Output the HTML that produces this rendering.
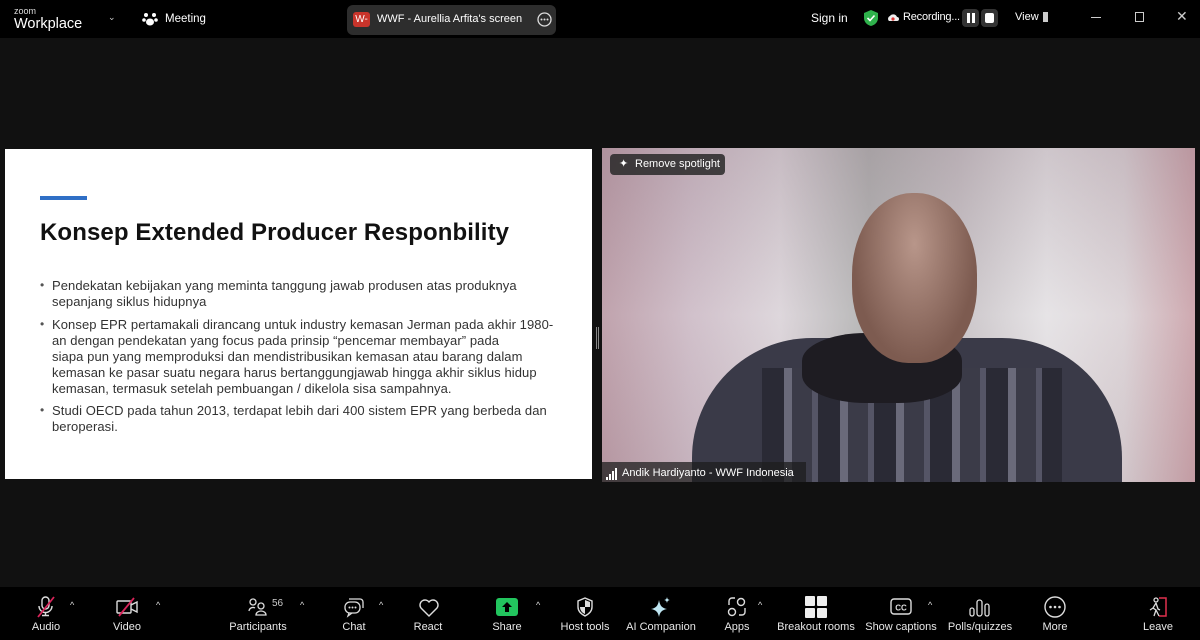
<!DOCTYPE html>
<html><head><meta charset="utf-8">
<style>
*{margin:0;padding:0;box-sizing:border-box}
body{width:1200px;height:640px;background:#111;position:relative;overflow:hidden;font-family:"Liberation Sans",sans-serif;color:#fff}
.abs{position:absolute}
.top{left:0;top:0;width:1200px;height:38px;background:#000}
.bot{left:0;top:587px;width:1200px;height:53px;background:#000}
.lbl{position:absolute;top:621px;font-size:11px;color:#e8e8e8;transform:translateX(-50%);white-space:nowrap}
.car{position:absolute;top:600px;font-size:9px;color:#ddd}
.slide{left:5px;top:149px;width:587px;height:330px;background:#fff;color:#111}
.slide p{position:absolute;left:47px;font-size:13px;letter-spacing:0.08px;line-height:16px;color:#333;white-space:nowrap}
.slide .b{position:absolute;left:35px;font-size:12px;color:#555}
svg{position:absolute;overflow:visible}
</style></head><body>
<div class="abs top"></div>
<div class="abs" style="left:14px;top:6px;font-size:9px;color:#ddd">zoom</div>
<div class="abs" style="left:14px;top:16px;font-size:14.5px;color:#fff">Workplace</div>
<div class="abs" style="left:108px;top:12px;font-size:9px;color:#ccc">⌄</div>
<svg style="left:142px;top:11px" width="16" height="16"><circle cx="4" cy="4" r="2" fill="#fff"/><circle cx="12" cy="4" r="2" fill="#fff"/><circle cx="2" cy="9" r="1.8" fill="#fff"/><circle cx="14" cy="9" r="1.8" fill="#fff"/><ellipse cx="8" cy="11" rx="4" ry="3.5" fill="#fff"/></svg>
<div class="abs" style="left:165px;top:13px;font-size:11.5px">Meeting</div>
<div class="abs" style="left:347px;top:5px;width:209px;height:30px;background:#2d2d2d;border-radius:6px"></div>
<div class="abs" style="left:353px;top:12px;width:17px;height:15px;background:#c8342b;border-radius:3px;font-size:10px;text-align:center;line-height:15px">W-</div>
<div class="abs" style="left:377px;top:13px;font-size:11px">WWF - Aurellia Arfita's screen</div>
<svg style="left:537px;top:12px" width="15" height="15"><circle cx="7.5" cy="7.5" r="6.5" fill="none" stroke="#ddd" stroke-width="1.3"/><circle cx="4.5" cy="7.5" r="1" fill="#ddd"/><circle cx="7.5" cy="7.5" r="1" fill="#ddd"/><circle cx="10.5" cy="7.5" r="1" fill="#ddd"/></svg>
<div class="abs" style="left:811px;top:11px;font-size:12px">Sign in</div>
<svg style="left:863px;top:9px" width="16" height="18"><path d="M8 1L15 4V9C15 13 12 16 8 17C4 16 1 13 1 9V4Z" fill="#2fb24c"/><path d="M4.5 9l2.5 2.5 4.5-5" stroke="#fff" stroke-width="1.6" fill="none"/></svg>
<svg style="left:887px;top:13px" width="12" height="9"><path d="M2 8a3 3 0 0 1 1-5a4 4 0 0 1 7 1a2 2 0 0 1 0 4z" fill="#eee"/><circle cx="6" cy="6" r="1.6" fill="#d33"/></svg>
<div class="abs" style="left:903px;top:11px;font-size:11px;letter-spacing:-0.2px">Recording...</div>
<div class="abs" style="left:962px;top:9px;width:17px;height:18px;background:#333;border-radius:4px"></div>
<div class="abs" style="left:967px;top:13px;width:2.5px;height:10px;background:#fff"></div><div class="abs" style="left:972px;top:13px;width:2.5px;height:10px;background:#fff"></div>
<div class="abs" style="left:981px;top:9px;width:17px;height:18px;background:#333;border-radius:4px"></div>
<div class="abs" style="left:985px;top:13px;width:9px;height:10px;background:#fff;border-radius:2px"></div>
<div class="abs" style="left:1015px;top:11px;font-size:11px">View</div>
<div class="abs" style="left:1043px;top:12px;width:5px;height:10px;background:#ccc"></div>
<div class="abs" style="left:1091px;top:17px;width:10px;height:1px;background:#ccc"></div>
<div class="abs" style="left:1135px;top:12px;width:9px;height:10px;border:1px solid #ccc"></div>
<div class="abs" style="left:1176px;top:8px;font-size:14px;color:#ccc">✕</div>

<div class="abs slide">
<div class="abs" style="left:35px;top:47px;width:47px;height:4px;background:#2f6fc6"></div>
<div class="abs" style="left:35px;top:70px;font-size:24px;font-weight:bold;color:#111;letter-spacing:0.1px">Konsep Extended Producer Responbility</div>
<span class="b" style="top:129px">•</span>
<p style="top:129px">Pendekatan kebijakan yang meminta tanggung jawab produsen atas produknya<br>sepanjang siklus hidupnya</p>
<span class="b" style="top:168px">•</span>
<p style="top:168px">Konsep EPR pertamakali dirancang untuk industry kemasan Jerman pada akhir 1980-<br>an dengan pendekatan yang focus pada prinsip “pencemar membayar” pada<br>siapa pun yang memproduksi dan mendistribusikan kemasan atau barang dalam<br>kemasan ke pasar suatu negara harus bertanggungjawab hingga akhir siklus hidup<br>kemasan, termasuk setelah pembuangan / dikelola sisa sampahnya.</p>
<span class="b" style="top:254px">•</span>
<p style="top:254px">Studi OECD pada tahun 2013, terdapat lebih dari 400 sistem EPR yang berbeda dan<br>beroperasi.</p>
</div>
<div class="abs" style="left:596px;top:327px;width:1px;height:22px;background:#888"></div><div class="abs" style="left:598px;top:327px;width:1px;height:22px;background:#888"></div>

<div class="abs" style="left:602px;top:148px;width:593px;height:334px;overflow:hidden;background:linear-gradient(90deg,#b5939f 0%,#c9b6c2 15%,#d8d0d6 30%,#aaa 45%,#c2bcc0 60%,#e2dfe2 75%,#d8cfd3 88%,#c69aa2 100%)">
<div class="abs" style="left:0;top:0;width:593px;height:334px;background:linear-gradient(180deg,rgba(160,140,150,.3),rgba(255,255,255,.15) 50%,rgba(180,160,165,.2))"></div>
<div class="abs" style="left:90px;top:190px;width:430px;height:200px;background:#3a3a48;border-radius:120px 120px 0 0"></div>
<div class="abs" style="left:160px;top:220px;width:300px;height:120px;background:repeating-linear-gradient(90deg,#2a2a35 0 22px,#6a6a7a 22px 30px,#3b3b48 30px 50px,#555566 50px 56px)"></div>
<div class="abs" style="left:200px;top:185px;width:160px;height:70px;background:#1e1c22;border-radius:40%"></div>
<div class="abs" style="left:250px;top:45px;width:125px;height:170px;background:radial-gradient(ellipse at 50% 30%,#b8968a,#7d5b50 70%);border-radius:48% 48% 45% 45%"></div>
<div class="abs" style="left:8px;top:6px;width:115px;height:21px;background:rgba(40,40,40,.85);border-radius:4px"></div>
<div class="abs" style="left:17px;top:9px;font-size:11px">✦</div>
<div class="abs" style="left:33px;top:10px;font-size:11px">Remove spotlight</div>
<div class="abs" style="left:0;top:314px;width:204px;height:20px;background:rgba(30,30,30,.75)"></div>
<div class="abs" style="left:4px;top:329px;width:2px;height:3px;background:#fff"></div>
<div class="abs" style="left:7px;top:326px;width:2px;height:6px;background:#fff"></div>
<div class="abs" style="left:10px;top:323px;width:2px;height:9px;background:#fff"></div>
<div class="abs" style="left:13px;top:320px;width:2px;height:12px;background:#fff"></div>
<div class="abs" style="left:20px;top:319px;font-size:11px">Andik Hardiyanto - WWF Indonesia</div>
</div>

<div class="abs bot"></div>
<svg style="left:36px;top:596px" width="20" height="22"><rect x="6" y="1" width="7" height="12" rx="3.5" fill="none" stroke="#ddd" stroke-width="1.4"/><path d="M3 10a6.5 6.5 0 0 0 13 0M9.5 16.5v3M6 19.5h7" stroke="#ddd" stroke-width="1.4" fill="none"/><path d="M2 21L18 1" stroke="#d9245a" stroke-width="1.8"/></svg>
<div class="car" style="left:70px">^</div><div class="lbl" style="left:46px">Audio</div>
<svg style="left:116px;top:597px" width="24" height="20"><rect x="1" y="4" width="14" height="12" rx="1" fill="none" stroke="#ddd" stroke-width="1.4"/><path d="M15 8l6-3v10l-6-3" fill="none" stroke="#ddd" stroke-width="1.4"/><path d="M3 19L18 1" stroke="#d9245a" stroke-width="1.8"/></svg>
<div class="car" style="left:156px">^</div><div class="lbl" style="left:127px">Video</div>
<svg style="left:248px;top:598px" width="20" height="18"><circle cx="5" cy="4" r="3" fill="none" stroke="#ddd" stroke-width="1.3"/><circle cx="13" cy="8" r="3" fill="none" stroke="#ddd" stroke-width="1.3"/><path d="M1 13a4 4 0 0 1 6-3M8 17a5 4 0 0 1 10 0z" fill="none" stroke="#ddd" stroke-width="1.3"/></svg>
<div class="abs" style="left:272px;top:598px;font-size:10px;color:#ccc">56</div>
<div class="car" style="left:300px">^</div><div class="lbl" style="left:258px">Participants</div>
<svg style="left:343px;top:596px" width="22" height="22"><path d="M6 3h11a3 3 0 0 1 3 3v6" fill="none" stroke="#ddd" stroke-width="1.3"/><rect x="2" y="6" width="15" height="11" rx="5" fill="none" stroke="#ddd" stroke-width="1.3"/><path d="M6 17l-1 3 4-3" fill="none" stroke="#ddd" stroke-width="1.3"/><circle cx="6.5" cy="11.5" r="1" fill="#ddd"/><circle cx="9.5" cy="11.5" r="1" fill="#ddd"/><circle cx="12.5" cy="11.5" r="1" fill="#ddd"/></svg>
<div class="car" style="left:379px">^</div><div class="lbl" style="left:354px">Chat</div>
<svg style="left:418px;top:598px" width="22" height="20"><path d="M11 18L3 10A4.5 4.5 0 0 1 11 4A4.5 4.5 0 0 1 19 10Z" fill="none" stroke="#ddd" stroke-width="1.4"/></svg>
<div class="lbl" style="left:428px">React</div>
<div class="abs" style="left:496px;top:598px;width:22px;height:18px;background:#22c55e;border-radius:3px"></div>
<svg style="left:496px;top:598px" width="22" height="18"><path d="M11 4l-5 5h3v5h4V9h3z" fill="#000"/></svg>
<div class="car" style="left:536px">^</div><div class="lbl" style="left:507px">Share</div>
<svg style="left:576px;top:597px" width="18" height="20"><path d="M9 1L16 4V10C16 14 13 17 9 19C5 17 2 14 2 10V4Z" fill="none" stroke="#ddd" stroke-width="1.4"/><path d="M9 10V17C6 16 4 13 4 10ZM9 10V3L14 5V10Z" fill="#ddd"/></svg>
<div class="lbl" style="left:585px">Host tools</div>
<svg style="left:650px;top:596px" width="22" height="22"><path d="M9 4C10 10 12 12 17 13C12 14 10 16 9 21C8 16 6 14 1 13C6 12 8 10 9 4Z" fill="#bfe6f2"/><path d="M17 1C17.4 3 18 3.6 20 4C18 4.4 17.4 5 17 7C16.6 5 16 4.4 14 4C16 3.6 16.6 3 17 1Z" fill="#bfe6f2"/></svg>
<div class="lbl" style="left:661px">AI Companion</div>
<svg style="left:727px;top:597px" width="20" height="20"><circle cx="14" cy="5" r="3.5" fill="none" stroke="#ddd" stroke-width="1.4"/><circle cx="5" cy="15" r="3.5" fill="none" stroke="#ddd" stroke-width="1.4"/><path d="M2 8V4a3 3 0 0 1 3-3h3M18 11v4a3 3 0 0 1-3 3h-3" fill="none" stroke="#ddd" stroke-width="1.4"/></svg>
<div class="car" style="left:758px">^</div><div class="lbl" style="left:737px">Apps</div>
<svg style="left:805px;top:596px" width="22" height="22"><rect x="0" y="0" width="10" height="10" rx="1" fill="#eee"/><rect x="12" y="0" width="10" height="10" rx="1" fill="#eee"/><rect x="0" y="12" width="10" height="10" rx="1" fill="#eee"/><rect x="12" y="12" width="10" height="10" rx="1" fill="#eee"/></svg>
<div class="lbl" style="left:816px">Breakout rooms</div>
<svg style="left:890px;top:598px" width="22" height="18"><rect x="1" y="1" width="20" height="15" rx="3" fill="none" stroke="#ddd" stroke-width="1.4"/><text x="11" y="12.5" font-size="8" font-family="Liberation Sans" fill="#ddd" text-anchor="middle" font-weight="bold">CC</text></svg>
<div class="car" style="left:928px">^</div><div class="lbl" style="left:901px">Show captions</div>
<svg style="left:969px;top:597px" width="22" height="20"><rect x="1" y="11" width="4" height="8" rx="2" fill="none" stroke="#ddd" stroke-width="1.3"/><rect x="8" y="3" width="5" height="16" rx="2.5" fill="none" stroke="#ddd" stroke-width="1.3"/><rect x="16" y="7" width="4" height="12" rx="2" fill="none" stroke="#ddd" stroke-width="1.3"/></svg>
<div class="lbl" style="left:980px">Polls/quizzes</div>
<svg style="left:1044px;top:596px" width="22" height="22"><circle cx="11" cy="11" r="10" fill="none" stroke="#ddd" stroke-width="1.4"/><circle cx="6.5" cy="11" r="1.3" fill="#ddd"/><circle cx="11" cy="11" r="1.3" fill="#ddd"/><circle cx="15.5" cy="11" r="1.3" fill="#ddd"/></svg>
<div class="lbl" style="left:1055px">More</div>
<svg style="left:1147px;top:596px" width="22" height="22"><path d="M12 2h7v18h-7" fill="none" stroke="#e0304e" stroke-width="1.5"/><circle cx="9" cy="4" r="2" fill="none" stroke="#ddd" stroke-width="1.3"/><path d="M9 7l-3 5 3 2-2 6M9 7l2 6 2 1M9 14l3 6M6 12l-3 2" fill="none" stroke="#ddd" stroke-width="1.3"/></svg>
<div class="lbl" style="left:1158px">Leave</div>
</body></html>
